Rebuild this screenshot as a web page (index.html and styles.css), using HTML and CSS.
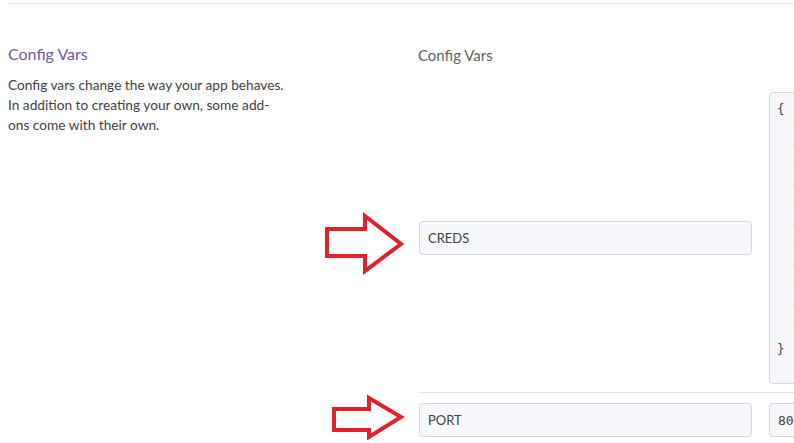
FILE: index.html
```html
<!DOCTYPE html>
<html>
<head>
<meta charset="utf-8">
<link rel="stylesheet" href="styles.css">
</head>
<body>
<div class="section">
  <div class="info">
    <h2 class="info-title">Config Vars</h2>
    <p class="info-text">Config vars change the way your app behaves.<br>In addition to creating your own, some add-<br>ons come with their own.</p>
  </div>
  <div class="vars">
    <h3 class="vars-title">Config Vars</h3>
    <div class="var-row first">
      <div class="key-input">CREDS</div>
      <div class="value-area"><div class="code-line">{</div><div class="code-line">  <span class="str">"type": "service_account",</span></div><div class="code-line">  <span class="str">"project_id": "app",</span></div><div class="code-line">  <span class="str">"private_key_id": "",</span></div><div class="code-line">  <span class="str">"private_key": "",</span></div><div class="code-line">  <span class="str">"client_email": "",</span></div><div class="code-line">  <span class="str">"client_id": "",</span></div><div class="code-line">  <span class="str">"auth_uri": "",</span></div><div class="code-line">  <span class="str">"token_uri": "",</span></div><div class="code-line">  <span class="str">"auth_provider": "",</span></div><div class="code-line">  <span class="str">"client_cert": "",</span></div><div class="code-line">  <span class="str">"universe": ""</span></div><div class="code-line">}</div></div>
    </div>
    <div class="var-row">
      <div class="key-input">PORT</div>
      <div class="value-input">8000</div>
    </div>
  </div>
</div>
<svg class="arrows" width="794" height="443" viewBox="0 0 794 443">
  <polygon points="327,229 365,229 365,216 401,244 365,271 365,256 327,256" fill="none" stroke="#e3212b" stroke-width="4" stroke-linejoin="miter"/>
  <polygon points="334,409 369,409 369,398 401,417 369,437 369,430 334,430" fill="none" stroke="#e3212b" stroke-width="4" stroke-linejoin="miter"/>
</svg>
</body>
</html>
```
FILE: styles.css
```css
html, body {
  margin: 0;
  padding: 0;
}
body {
  width: 794px;
  height: 443px;
  overflow: hidden;
  position: relative;
  background: #ffffff;
  font-family: Lato, "Open Sans", sans-serif;
}
.section {
  margin: 3px 0 0 8px;
  border-top: 1px solid #e6e6ea;
  display: flex;
}
.info {
  width: 410px;
  flex: none;
  padding-top: 38px;
}
.info-title {
  margin: 0;
  font-size: 16px;
  line-height: 24px;
  font-weight: 400;
  color: #79589f;
}
.info-text {
  margin: 9px 0 0;
  font-size: 13.7px;
  line-height: 20px;
  color: #3f3f44;
}
.vars {
  flex: none;
  width: 700px;
  padding-top: 41px;
}
.vars-title {
  margin: 0 0 27px;
  font-size: 15px;
  line-height: 20px;
  font-weight: 400;
  color: #5f6166;
}
.var-row {
  display: flex;
  align-items: center;
  gap: 17px;
  padding: 10px 0 0 1px;
}
.var-row.first {
  padding: 0 0 8px 1px;
  border-bottom: 1px solid #e6e6ea;
}
.key-input, .value-input {
  box-sizing: border-box;
  flex: none;
  height: 34px;
  border: 1px solid #cfd7e6;
  border-radius: 4px;
  background: #f7f8fb;
  display: flex;
  align-items: center;
  padding-left: 8px;
  color: #3f3f44;
}
.key-input {
  width: 333px;
  font-size: 13px;
}
.value-input {
  width: 300px;
  font-family: "DejaVu Sans Mono", monospace;
  font-size: 13px;
  color: #3f3f44;
}
.value-area {
  box-sizing: border-box;
  flex: none;
  width: 300px;
  height: 292px;
  border: 1px solid #cfd7e6;
  border-radius: 4px;
  background: #f7f8fb;
  padding: 6px 0 0 7px;
  font-family: "DejaVu Sans Mono", monospace;
  font-size: 12.5px;
  line-height: 20px;
  color: #3f3f44;
  white-space: pre;
  overflow: hidden;
}
.str {
  color: #e0a030;
}
.arrows {
  position: absolute;
  left: 0;
  top: 0;
  pointer-events: none;
}
```
